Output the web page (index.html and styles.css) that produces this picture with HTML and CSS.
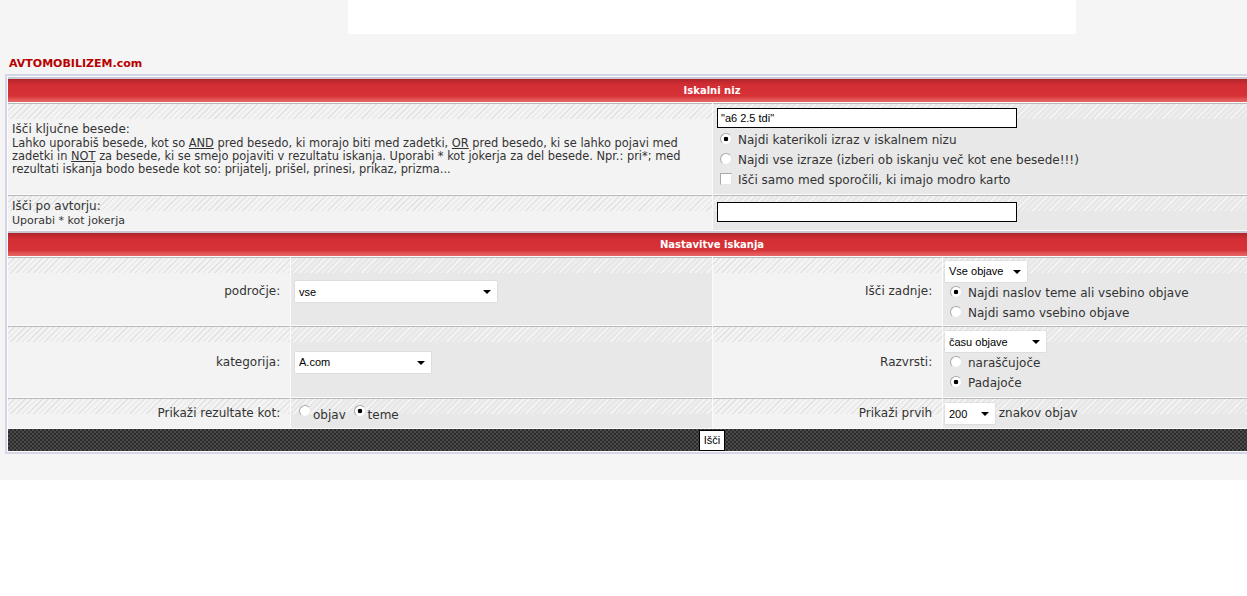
FILE: index.html
```html
<!DOCTYPE html>
<html lang="sl">
<head>
    <meta charset="UTF-8">
    <title>AVTOMOBILIZEM.com - Iskanje</title>
    <link rel="stylesheet" href="styles.css">
</head>
<body>
<div class="page-bg">
    <div class="page">
        <div class="banner"></div>
        <div class="site-title">AVTOMOBILIZEM.com</div>

        <table class="forumline">
            <colgroup>
                <col class="c1"><col class="c2"><col class="c3"><col class="c4">
            </colgroup>
            <!-- iskalni niz -->
            <tr class="head"><th colspan="4">Iskalni niz</th></tr>
            <tr class="r-keys">
                <td colspan="2" class="row1">
                    <span class="gen">Išči ključne besede:</span>
                    <span class="gensmall">Lahko uporabiš besede, kot so <u>AND</u> pred besedo, ki morajo biti med zadetki, <u>OR</u> pred besedo, ki se lahko pojavi med zadetki in <u>NOT</u> za besede, ki se smejo pojaviti v rezultatu iskanja. Uporabi * kot jokerja za del besede. Npr.: pri*; med rezultati iskanja bodo besede kot so: prijatelj, prišel, prinesi, prikaz, prizma...</span>
                </td>
                <td colspan="2" class="row2 opts">
                    <input type="text" class="post" value="&quot;a6 2.5 tdi&quot;">
                    <label class="opt"><input type="radio" name="terms" checked>Najdi katerikoli izraz v iskalnem nizu</label>
                    <label class="opt"><input type="radio" name="terms">Najdi vse izraze (izberi ob iskanju več kot ene besede!!!)</label>
                    <label class="opt"><input type="checkbox">Išči samo med sporočili, ki imajo modro karto</label>
                </td>
            </tr>
            <tr class="r-author">
                <td colspan="2" class="row1">
                    <span class="gen">Išči po avtorju:</span>
                    <span class="gensmall">Uporabi * kot jokerja</span>
                </td>
                <td colspan="2" class="row2 opts">
                    <input type="text" class="post" value="">
                </td>
            </tr>

            <!-- nastavitve -->
            <tr class="head"><th colspan="4">Nastavitve iskanja</th></tr>
            <tr class="r-forum">
                <td class="row1 lbl">področje:&nbsp;</td>
                <td class="row2 opts">
                    <span class="sel sel-forum"><select><option>vse</option></select></span>
                </td>
                <td class="row1 lbl">Išči zadnje:&nbsp;</td>
                <td class="row2 opts">
                    <span class="sel sel-time"><select><option>Vse objave</option></select></span>
                    <label class="opt"><input type="radio" name="fields" checked>Najdi naslov teme ali vsebino objave</label>
                    <label class="opt"><input type="radio" name="fields">Najdi samo vsebino objave</label>
                </td>
            </tr>
            <tr class="r-cat">
                <td class="row1 lbl">kategorija:&nbsp;</td>
                <td class="row2 opts">
                    <span class="sel sel-cat"><select><option>A.com</option></select></span>
                </td>
                <td class="row1 lbl">Razvrsti:&nbsp;</td>
                <td class="row2 opts">
                    <span class="sel sel-sort"><select><option>času objave</option></select></span>
                    <label class="opt"><input type="radio" name="dir">naraščujoče</label>
                    <label class="opt"><input type="radio" name="dir" checked>Padajoče</label>
                </td>
            </tr>
            <tr class="r-show">
                <td class="row1 lbl">Prikaži rezultate kot:&nbsp;</td>
                <td class="row2 opts inline">
                    <input type="radio" name="show">objav <input type="radio" name="show" checked>teme
                </td>
                <td class="row1 lbl">Prikaži prvih&nbsp;</td>
                <td class="row2 opts inline">
                    <span class="sel sel-chars"><select><option>200</option></select></span> znakov objav
                </td>
            </tr>
            <tr class="foot">
                <td colspan="4" class="catBottom"><input type="submit" class="mainoption" value="Išči"></td>
            </tr>
        </table>
    </div>
</div>
</body>
</html>
```

FILE: styles.css
```css
html, body{
    margin: 0;
    padding: 0;
    background: #fff;
}
.page-bg{
    background: #f5f5f5;
    height: 480px;
    overflow: hidden;
}
/* stran je sirsa od okna, zato se vse centrira na 712px */
.page{
    width: 1424px;
    font-family: "DejaVu Sans", Verdana, sans-serif;
    color: #333;
}
.banner{
    width: 728px;
    height: 34px;
    margin: 0 auto;
    background: #fff;
}
.site-title{
    margin: 23px 0 0 9px;
    height: 17px;
    font-size: 11px;
    line-height: 14px;
    font-weight: bold;
    color: #b80000;
}

/* glavna tabela */
.forumline{
    width: 1412px;
    margin-left: 5px;
    table-layout: fixed;
    border: 2px solid #d4d6e6;
    border-spacing: 1px;
    background: #fbfbfd;
}
.c1{ width: 282px; }
.c2{ width: 421px; }
.c3{ width: 229px; }
.c4{ width: 473px; }

.head th{
    height: 23px;
    padding: 0;
    border-top: 2px solid #c9c9d3;
    background: linear-gradient(#ac2429 0, #c42a30 3px, #d42f35 7px, #d63137 17px, #e25253 20px, #e56565 23px);
    color: #fff;
    font-size: 10px;
    font-weight: bold;
    text-align: center;
}
.r-keys{ height: 91px; }
.r-author{ height: 35px; }
.r-forum{ height: 68px; }
.r-cat{ height: 71px; }
.r-show{ height: 30px; }
.foot{ height: 22px; }

td{
    padding: 2px 4px;
    border-top: 1px solid #b9b9b9;
    vertical-align: middle;
    font-size: 12px;
    line-height: 15px;
}
.row1{
    background:
        repeating-linear-gradient(135deg, #e2e2e2 0 1px, transparent 1px 4px) top left / 100% 15px no-repeat,
        #f3f3f3;
}
.row2{
    background:
        repeating-linear-gradient(135deg, #f6f6f6 0 1px, transparent 1px 4px) top left / 100% 15px no-repeat,
        #e8e8e8;
}
.gen{
    display: block;
    font-size: 12px;
    line-height: 15px;
}
.gensmall{
    display: block;
    font-size: 11.4px;
    line-height: 13px;
}
.r-author .gensmall{ font-size: 11px; }
.lbl{
    text-align: right;
    white-space: nowrap;
    padding-right: 6px;
}

/* kontrole */
.opts{
    padding-left: 4px;
}
.post{
    display: block;
    width: 300px;
    height: 20px;
    box-sizing: border-box;
    margin: 0 0 2px 0;
    padding: 1px 3px;
    border: 1px solid #000;
    font-family: "Liberation Sans", Arial, sans-serif;
    font-size: 11px;
    color: #000;
}
.opt{
    display: block;
    height: 20px;
    line-height: 20px;
}
input[type=radio], input[type=checkbox]{
    appearance: none;
    width: 12px;
    height: 12px;
    margin: 0 6px 0 3px;
    vertical-align: -1px;
    border: 1px solid;
    border-color: #a8a8a8 #e6e6e6 #e6e6e6 #a8a8a8;
    background: #fff;
}
input[type=radio]{
    border-radius: 50%;
}
input[type=radio]:checked{
    background: radial-gradient(circle, #000 0 2px, #fff 2.6px);
}
.inline input[type=radio]{
    margin: 0 2px 0 4px;
    vertical-align: 2px;
}

.sel{
    position: relative;
    display: inline-block;
    vertical-align: middle;
}
.opts .sel-time, .opts .sel-sort{
    display: block;
    width: max-content;
    margin: 0 0 1px -2px;
}
.sel select{
    display: block;
    appearance: none;
    height: 21px;
    padding: 0 18px 0 4px;
    border: none;
    background: #fff;
    box-shadow: 0 0 1px rgba(0, 0, 0, 0.25);
    font-family: "Liberation Sans", Arial, sans-serif;
    font-size: 11px;
    color: #000;
    border-radius: 0;
}
/* puscica na selectu */
.sel::after{
    content: "";
    position: absolute;
    right: 6px;
    top: 9px;
    border-left: 4px solid transparent;
    border-right: 4px solid transparent;
    border-top: 4px solid #000;
}
.sel-forum select{ width: 202px; }
.sel-cat select{ width: 136px; }
.sel-time select{ width: 82px; }
.sel-sort select{ width: 101px; }
.sel-chars select{ width: 50px; }
.sel-chars{ margin-left: -2px; }

.catBottom{
    padding: 0;
    border-top: none;
    text-align: center;
    background: repeating-conic-gradient(#2b2b2b 0 25%, #4c4c4c 0 50%) 0 0 / 4px 4px;
}
.mainoption{
    height: 21px;
    margin: 0;
    padding: 0 4px;
    border: 1px solid #000;
    background: #fff;
    font-family: "Liberation Sans", Arial, sans-serif;
    font-size: 11px;
    color: #000;
    vertical-align: top;
}
```
